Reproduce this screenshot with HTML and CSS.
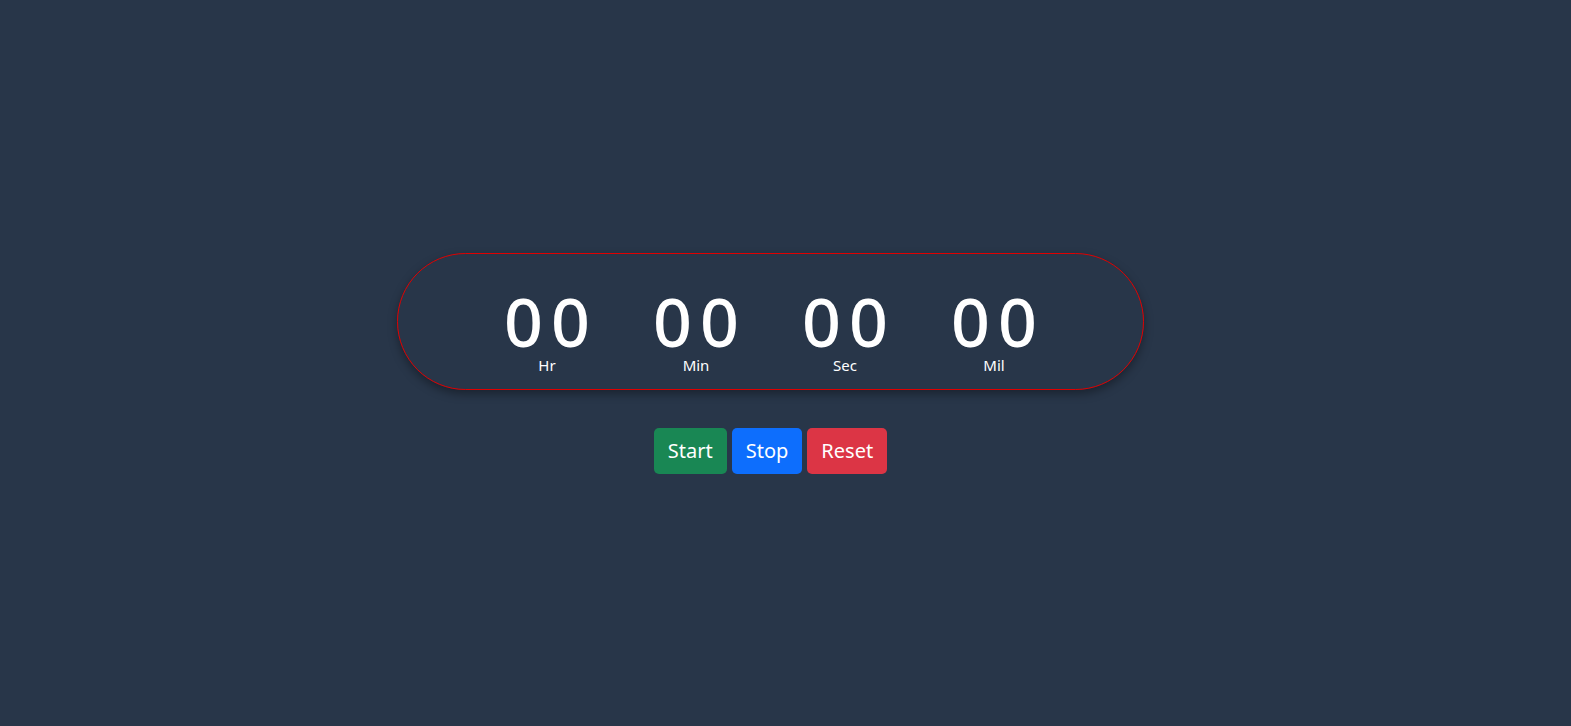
FILE: index.html
```html
<!DOCTYPE html>
<html lang="en">
<head>
<meta charset="utf-8">
<title>Stopwatch</title>
<link rel="stylesheet" href="styles.css">
</head>
<body>
<main class="page">
  <section class="watch">
    <div class="timer">
      <div class="unit"><span class="digits">00</span><span class="label">Hr</span></div>
      <div class="unit"><span class="digits">00</span><span class="label">Min</span></div>
      <div class="unit"><span class="digits">00</span><span class="label">Sec</span></div>
      <div class="unit"><span class="digits">00</span><span class="label">Mil</span></div>
    </div>
    <div class="controls">
      <button class="btn btn-start">Start</button>
      <button class="btn btn-stop">Stop</button>
      <button class="btn btn-reset">Reset</button>
    </div>
  </section>
</main>
</body>
</html>
```
FILE: styles.css
```css
* { box-sizing: border-box; }
html, body { margin: 0; height: 100%; }
body {
  background: #283649;
  font-family: "Noto Sans", "Open Sans", sans-serif;
  color: #fff;
}
.page {
  height: 100%;
  padding-right: 30px;
  display: flex;
  align-items: center;
  justify-content: center;
}
.watch {
  display: flex;
  flex-direction: column;
  align-items: center;
  gap: 38px;
}
.timer {
  width: 747px;
  height: 137px;
  border: 1px solid #e00000;
  border-radius: 70px;
  box-shadow: 0 4px 10px rgba(0, 0, 0, 0.35);
  display: flex;
  justify-content: center;
  align-items: center;
  padding-top: 26px;
}
.unit {
  width: 149px;
  display: flex;
  flex-direction: column;
  align-items: center;
}
.digits {
  font-size: 68px;
  line-height: 56px;
  font-weight: 500;
  letter-spacing: 8px;
  padding-left: 8px;
}
.label {
  font-size: 15px;
  line-height: 20px;
  margin-top: 6px;
}
.controls {
  display: flex;
  gap: 5px;
}
.btn {
  font-family: inherit;
  font-size: 20px;
  line-height: 28px;
  color: #fff;
  border: 1px solid transparent;
  border-radius: 5px;
  padding: 8px 13px;
  cursor: pointer;
}
.btn-start { background: #198754; }
.btn-stop { background: #0d6efd; }
.btn-reset { background: #dc3545; }
```
